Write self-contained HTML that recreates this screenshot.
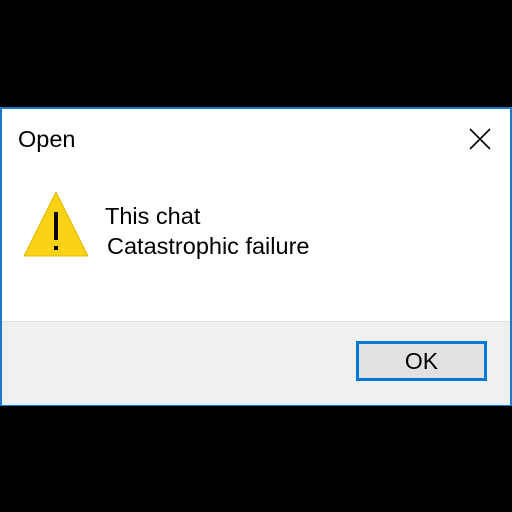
<!DOCTYPE html>
<html><head><style>
body{margin:0;width:512px;height:512px;background:#000;position:relative;overflow:hidden;font-family:"Liberation Sans",sans-serif;}
.dlg{position:absolute;left:0;top:107px;width:508px;height:295px;background:#fff;border:2px solid #1979ca;}
.foot{position:absolute;left:0;top:212px;width:508px;height:83px;background:#f0f0f0;border-top:1px solid #dfdfdf;}
.t{position:absolute;color:#000;font-size:23.5px;white-space:nowrap;}
.btn{position:absolute;left:354px;top:232px;width:125px;height:34px;border:3px solid #0078d7;background:#e1e1e1;text-align:center;line-height:34px;font-size:23px;}
</style></head><body>
<div class="dlg">
<div class="t" style="left:16px;top:17px;">Open</div>
<svg style="position:absolute;left:466px;top:18px" width="24" height="24"><path d="M2 2L22 22M22 2L2 22" stroke="#000" stroke-width="1.6"/></svg>
<svg style="position:absolute;left:20px;top:81px" width="68" height="68"><polygon points="34,2 66,66 2,66" fill="#fcd116" stroke="#e0b800" stroke-width="1"/><rect x="32" y="22" width="4" height="28" fill="#000"/><rect x="32" y="56" width="4" height="4" fill="#000"/></svg>
<div class="t" style="left:103px;top:94px;">This chat</div>
<div class="t" style="left:105px;top:124px;">Catastrophic failure</div>
<div class="foot"></div>
<div class="btn">OK</div>
</div>
</body></html>
